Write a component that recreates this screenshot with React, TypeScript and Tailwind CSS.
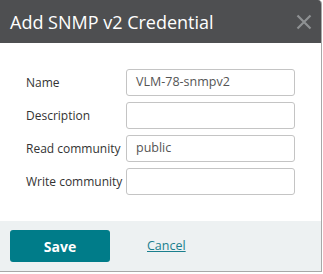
import React from "react";

const font = { fontFamily: '"Open Sans", "Noto Sans", sans-serif' };

function Field({ label, value }: { label: string; value?: string }) {
  return (
    <div className="flex items-center h-[27px]">
      <div className="w-[126px] pl-[26px] text-[12px] text-[#333333] whitespace-nowrap leading-none">{label}</div>
      <div className="w-[169px] h-[27px] border border-[#c4c4c4] rounded-[3px] bg-white flex items-center pl-[9px] text-[12.5px] text-[#555555]">
        {value}
      </div>
    </div>
  );
}

export default function App() {
  return (
    <div className="w-[323px] h-[274px] bg-white" style={font}>
      <div className="w-[322px] h-[272px] flex flex-col border-r border-b border-[#a8a8a8] rounded-tr-[4px] overflow-hidden">
        <div className="h-[43px] bg-[#4e4f51] flex items-center justify-between pl-[10px] pr-[10px] shrink-0">
          <span className="text-white text-[18px] leading-none">Add SNMP v2 Credential</span>
          <svg width="16" height="16" viewBox="0 0 16 16" className="mr-[-1px]">
            <path d="M1.5 1.5 L14.5 14.5 M14.5 1.5 L1.5 14.5" stroke="#8e9193" strokeWidth="2.2" fill="none" />
          </svg>
        </div>
        <div className="flex-1 bg-white pt-[26px] flex flex-col gap-[6px]">
          <Field label="Name" value="VLM-78-snmpv2" />
          <Field label="Description" />
          <Field label="Read community" value="public" />
          <Field label="Write community" />
        </div>
        <div className="h-[50px] bg-[#edf1f2] flex items-center pl-[10px] shrink-0">
          <button className="w-[100px] h-[32px] bg-[#007c89] rounded-[3px] text-white text-[14px] font-bold">Save</button>
          <span className="ml-[37px] text-[12.5px] text-[#1a7f8e] underline">Cancel</span>
        </div>
      </div>
    </div>
  );
}
